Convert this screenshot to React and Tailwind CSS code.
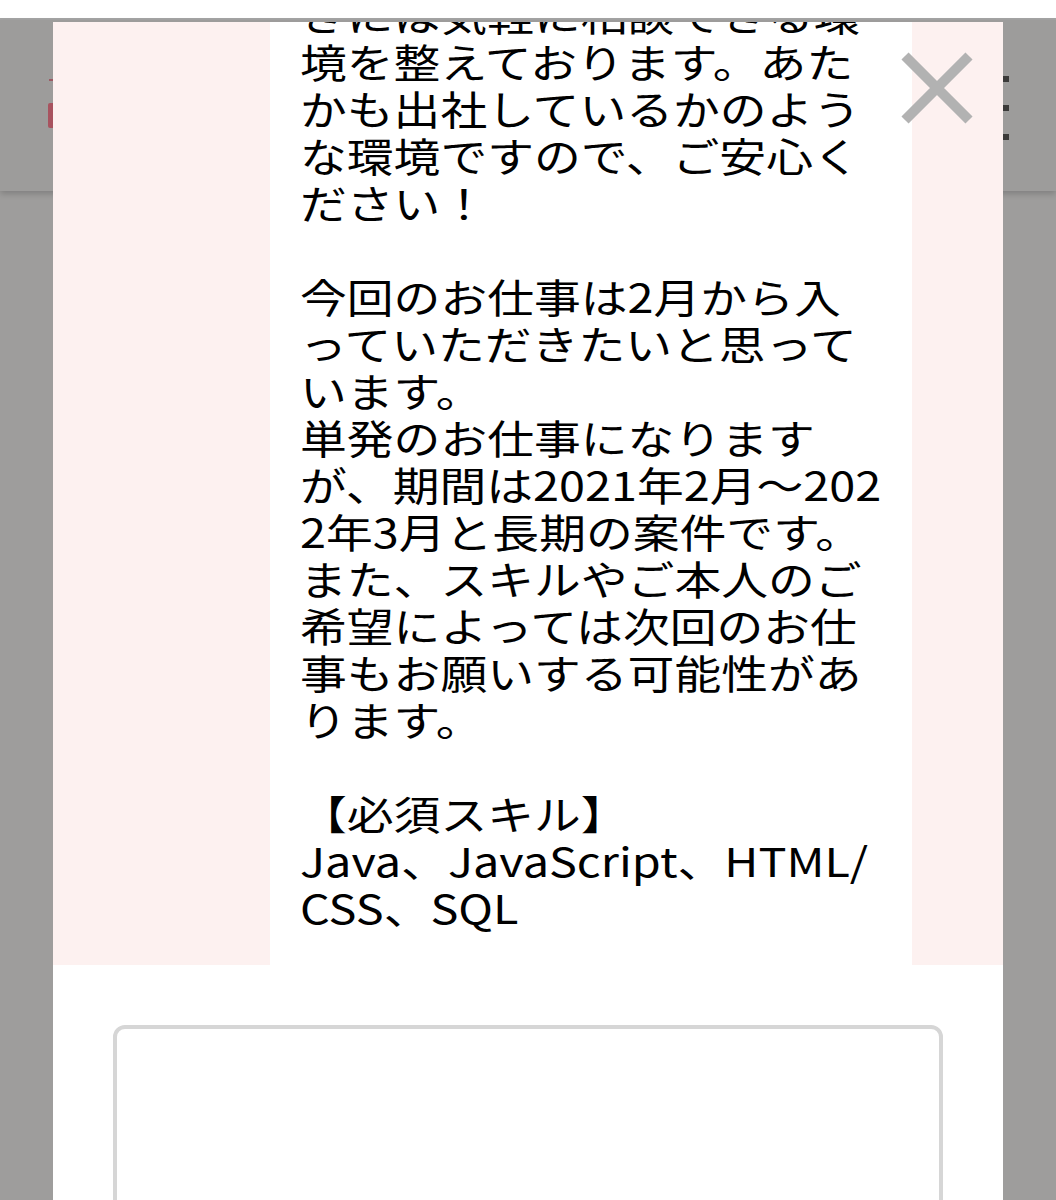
import React from "react";

const lines = [
  "きには気軽に相談できる環",
  "境を整えております。あた",
  "かも出社しているかのよう",
  "な環境ですので、ご安心く",
  "ださい！",
  "",
  "今回のお仕事は2月から入",
  "っていただきたいと思って",
  "います。",
  "単発のお仕事になります",
  "が、期間は2021年2月～202",
  "2年3月と長期の案件です。",
  "また、スキルやご本人のご",
  "希望によっては次回のお仕",
  "事もお願いする可能性があ",
  "ります。",
  "",
  "【必須スキル】",
  "Java、JavaScript、HTML/",
  "CSS、SQL",
];

export default function App() {
  return (
    <div
      className="relative w-[1056px] h-[1200px] overflow-hidden bg-[#9e9d9c]"
      style={{ fontFamily: '"Noto Sans CJK JP", "Noto Sans", sans-serif' }}
    >
      {/* top white bar */}
      <div className="h-[20px] bg-white border-b-2 border-[#a5a5a5]" />
      {/* header behind overlay */}
      <div className="h-[171px] bg-[#9d9c9b] shadow-[0_3px_6px_rgba(0,0,0,0.18)] flex justify-between pl-[48px] pr-[47px]">
        <div className="flex flex-col pt-[59px] gap-[18px]">
          <div className="w-[10px] h-[6px] ml-[1px] border-t-2 border-[#9c5a63]" />
          <div className="w-[8px] h-[25px] rounded-[2px] bg-[#a8535f]" />
        </div>
        <div className="flex flex-col pt-[56px] gap-[23px]">
          <div className="w-[6px] h-[6px] bg-[#3b3a39]" />
          <div className="w-[6px] h-[6px] bg-[#3b3a39]" />
          <div className="w-[6px] h-[6px] bg-[#3b3a39]" />
        </div>
      </div>

      {/* modal */}
      <div className="absolute left-[53px] top-[22px] w-[950px] bottom-0 flex flex-col bg-white">
        <div className="h-[943px] shrink-0 bg-[#fdf1f0] pl-[217px]">
          <div className="w-[642px] h-full bg-white overflow-hidden pl-[30px]">
            <div className="-mt-[31px] origin-left scale-x-[1.17] text-[40px] leading-[47px] text-black whitespace-nowrap">
              {lines.map((l, i) => (
                <div key={i} className="h-[47px]">{l}</div>
              ))}
            </div>
          </div>
        </div>
        <div className="flex-1 bg-white pt-[60px] pl-[60px]">
          <div className="w-[830px] h-[220px] border-4 border-[#d6d6d6] rounded-[12px] bg-white" />
        </div>

        {/* close button */}
        <div className="absolute left-[848px] top-[30px] w-[72px] h-[72px]">
          <svg viewBox="0 0 72 72" className="w-full h-full">
            <path d="M4 4 L68 68 M68 4 L4 68" stroke="#b2b2b2" strokeWidth="10" />
          </svg>
        </div>
      </div>
    </div>
  );
}
